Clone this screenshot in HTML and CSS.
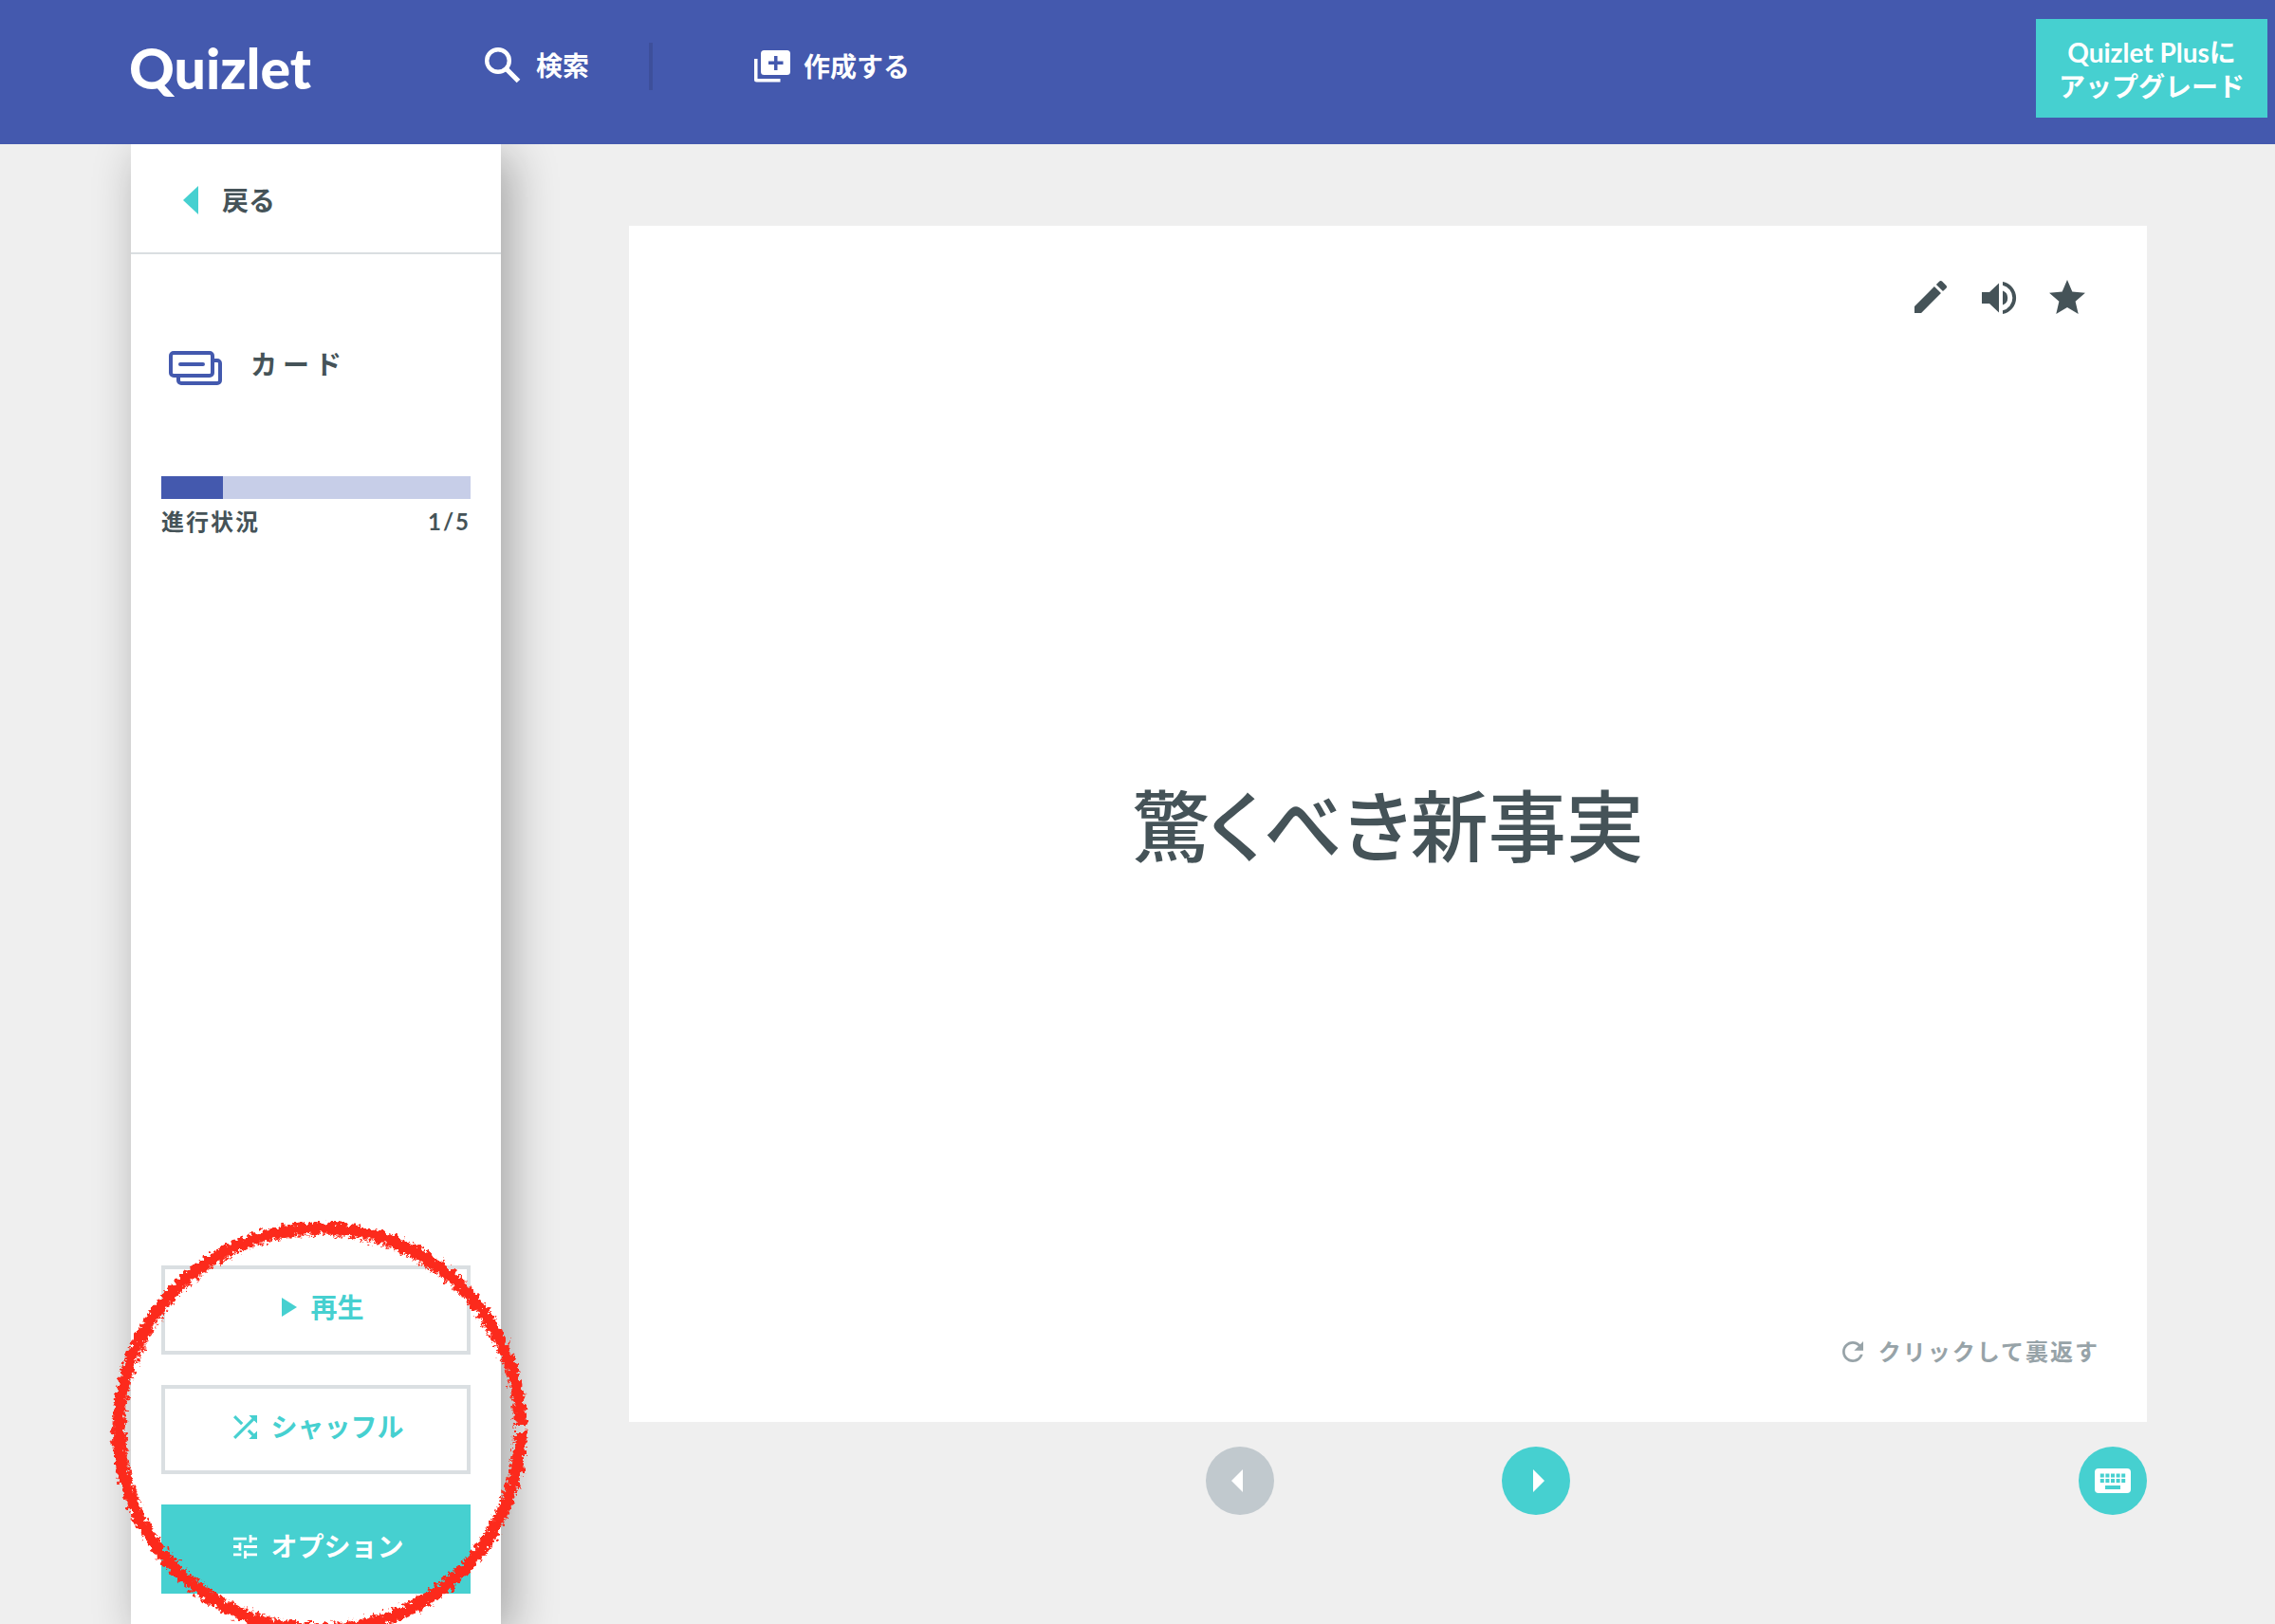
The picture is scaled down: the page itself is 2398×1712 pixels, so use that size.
FILE: index.html
```html
<!DOCTYPE html>
<html lang="ja">
<head>
<meta charset="utf-8">
<meta name="viewport" content="width=device-width, initial-scale=1">
<title>カード | Quizlet</title>
<link rel="stylesheet" href="styles.css">
</head>
<body>
<header class="site-header">
  <a class="logo" href="#">Quizlet</a>
  <nav class="nav">
    <a class="nav-link nav-search" href="#">
      <svg class="icon-search" viewBox="0 0 38 38" aria-hidden="true"><circle cx="14" cy="14" r="11.8" fill="none" stroke="currentColor" stroke-width="4.4"/><path d="M23.500 23.500L35.500 35.500" stroke="currentColor" stroke-width="5.200"/></svg>
      <span>検索</span>
    </a>
    <a class="nav-link nav-create" href="#">
      <svg class="icon-create" viewBox="0 0 38 34" aria-hidden="true"><path fill="currentColor" fill-rule="evenodd" d="M10.500 0h24a3.500 3.500 0 0 1 3.500 3.500v19a3.500 3.500 0 0 1-3.500 3.500h-24a3.500 3.500 0 0 1-3.500-3.500v-19a3.500 3.500 0 0 1 3.500-3.500zM21 6v5.500h-6v3.500h6v6h3.500v-6h6v-3.500h-6v-5.500zM0 9h3.500v21h24v3.500h-25a2.500 2.500 0 0 1-2.500-2.500z"/></svg>
      <span>作成する</span>
    </a>
  </nav>
  <button class="upgrade" type="button">Quizlet Plusに<br>アップグレード</button>
</header>
<div class="layout">
  <aside class="sidebar">
    <a class="back" href="#">
      <svg class="icon-back" viewBox="0 0 16 30" aria-hidden="true"><path fill="#46d0d0" d="M16 0v30L0 15z"/></svg>
      <span>戻る</span>
    </a>
    <h1 class="mode">
      <svg class="icon-cards" viewBox="0 0 56 36" fill="none" stroke="#4359ae" stroke-width="4" stroke-linecap="round" aria-hidden="true"><rect x="2" y="2" width="44" height="24" rx="3"/><path d="M12 14h24M48 10h3a3 3 0 0 1 3 3v18a3 3 0 0 1-3 3H13a3 3 0 0 1-3-3v-3"/></svg>
      <span>カード</span>
    </h1>
    <div class="progress">
      <div class="progress-track"><div class="progress-fill" style="width:20%"></div></div>
      <div class="progress-text"><span>進行状況</span><span>1/5</span></div>
    </div>
    <div class="actions">
      <button class="action" type="button">
        <svg class="icon-action" viewBox="-9 -2 25 25" aria-hidden="true"><path fill="currentColor" d="M0 0l16 10L0 20z"/></svg>
        <span>再生</span>
      </button>
      <button class="action" type="button">
        <svg class="icon-action" viewBox="4 4 16 16" aria-hidden="true"><path fill="currentColor" d="M10.590 9.170L5.410 4 4 5.410l5.170 5.170 1.420-1.410zM14.500 4l2.040 2.040L4 18.590 5.410 20 17.960 7.460 20 9.500V4h-5.500zm.330 9.410l-1.410 1.410 3.130 3.130L14.500 20H20v-5.500l-2.040 2.040-3.130-3.130z"/></svg>
        <span>シャッフル</span>
      </button>
      <button class="action action-primary" type="button">
        <svg class="icon-action" viewBox="3 3 18 18" aria-hidden="true"><path fill="currentColor" d="M3 17v2h6v-2H3zM3 5v2h10V5H3zm10 16v-2h8v-2h-8v-2h-2v6h2zM7 9v2H3v2h4v2h2V9H7zm14 4v-2H11v2h10zm-6-4h2V7h4V5h-4V3h-2v6z"/></svg>
        <span>オプション</span>
      </button>
      <svg class="marker" viewBox="0 0 460 460" aria-hidden="true">
        <defs>
          <filter id="crayon" x="0" y="0" width="460" height="460" filterUnits="userSpaceOnUse">
            <feTurbulence type="fractalNoise" baseFrequency="0.200" numOctaves="3" seed="4" result="n"/>
            <feDisplacementMap in="SourceGraphic" in2="n" scale="12" xChannelSelector="R" yChannelSelector="G"/>
          </filter>
        </defs>
        <g filter="url(#crayon)" fill="none" stroke="#fc2b1c">
          <path stroke-width="12" d="M443 226A212 212 0 1 0 443 233"/>
          <circle cx="231" cy="230" r="205" stroke-width="2" stroke-dasharray="3 3 5 2 2 4"/>
          <circle cx="231" cy="230" r="218" stroke-width="1" stroke-dasharray="5 3 2 6"/>
        </g>
      </svg>
    </div>
  </aside>
  <main class="main">
    <section class="card">
      <div class="card-tools">
        <button class="tool" type="button" aria-label="編集"><svg class="icon-pencil" viewBox="3 3 18 18" aria-hidden="true"><path fill="currentColor" d="M3 17.250V21h3.750L17.810 9.940l-3.750-3.750L3 17.250zM20.710 7.040c.390-.390.390-1.020 0-1.410l-2.340-2.340c-.390-.390-1.020-.390-1.410 0l-1.830 1.830 3.750 3.750 1.830-1.830z"/></svg></button>
        <button class="tool" type="button" aria-label="音声"><svg class="icon-sound" viewBox="-1 -1 36 34" aria-hidden="true"><path fill="currentColor" d="M0 11h8L18 1.500v31L8 23H0zM22 9.500a8 8 0 0 1 0 15zM22 0a17.300 17.300 0 0 1 0 34v-3.800a13.600 13.600 0 0 0 0-26.400z"/></svg></button>
        <button class="tool" type="button" aria-label="スター"><svg class="icon-star" viewBox="2 2 20 19" aria-hidden="true"><path fill="currentColor" d="M12 17.270L18.180 21l-1.640-7.030L22 9.240l-7.190-.610L12 2 9.190 8.630 2 9.240l5.460 4.730L5.820 21z"/></svg></button>
      </div>
      <p class="term">驚くべき新事実</p>
      <button class="flip" type="button">
        <svg class="icon-flip" viewBox="4 4 16 16" aria-hidden="true"><path fill="currentColor" d="M17.650 6.350C16.200 4.900 14.210 4 12 4c-4.420 0-7.990 3.580-7.990 8s3.570 8 7.990 8c3.730 0 6.840-2.550 7.730-6h-2.080c-.820 2.330-3.040 4-5.650 4-3.310 0-6-2.690-6-6s2.690-6 6-6c1.660 0 3.140.690 4.220 1.780L13 11h7V4l-2.350 2.350z"/></svg>
        <span>クリックして裏返す</span>
      </button>
    </section>
    <div class="controls">
      <div class="pager">
        <button class="round round-off" type="button" aria-label="前へ"><svg class="icon-step" viewBox="0 0 18 24" aria-hidden="true"><path fill="currentColor" d="M12 0v24L0 12z"/></svg></button>
        <button class="round" type="button" aria-label="次へ"><svg class="icon-step" viewBox="0 0 18 24" aria-hidden="true"><path fill="currentColor" d="M6 0v24l12-12z"/></svg></button>
      </div>
      <button class="round" type="button" aria-label="キーボード"><svg class="icon-keyboard" viewBox="0 0 38 26" aria-hidden="true"><rect width="38" height="26" rx="4" fill="currentColor"/><path stroke="#46d0d0" stroke-width="4" stroke-dasharray="4 1.600" d="M5.800 7.500h26.800M5.800 13h26.800"/><path stroke="#46d0d0" stroke-width="4" d="M11 20h16"/></svg></button>
    </div>
  </main>
</div>
</body>
</html>
```
FILE: styles.css
```css
* { box-sizing: border-box; }

body {
  margin: 0;
  min-height: 100vh;
  display: flex;
  flex-direction: column;
  overflow: hidden;
  background: #efefef;
  color: #455358;
  font-family: Lato, "Noto Sans CJK JP", sans-serif;
  font-size: 28px;
  font-weight: 700;
  line-height: 36px;
}

a { color: inherit; text-decoration: none; }
button { padding: 0; border: 0; background: none; color: inherit; font: inherit; cursor: pointer; }
svg { display: block; flex: none; }

.site-header {
  position: relative;
  z-index: 1;
  height: 152px;
  padding: 20px 8px 28px 136px;
  display: flex;
  align-items: center;
  background: #4459ae;
  color: #fff;
}
.logo { width: 375px; font-size: 59px; font-weight: 900; line-height: 68px; }
.nav { display: flex; align-items: center; flex: 1; padding-bottom: 4px; }
.nav-link { display: flex; align-items: center; }
.nav-search { width: 177px; height: 50px; gap: 16px; padding-bottom: 2px; border-right: 4px solid #3d4f9b; }
.nav-create { margin-left: 107px; gap: 14px; }
.icon-search { width: 38px; height: 38px; }
.icon-create { width: 38px; height: 34px; }
.upgrade { width: 244px; height: 104px; padding-top: 2px; background: #46d0d0; }

.layout { flex: 1; display: flex; }

.sidebar {
  width: 390px;
  margin-left: 138px;
  padding-bottom: 32px;
  display: flex;
  flex-direction: column;
  flex: none;
  background: #fff;
  box-shadow: 10px 12px 46px rgba(0, 0, 0, 0.32);
}
.back {
  height: 116px;
  padding: 4px 0 0 55px;
  display: flex;
  align-items: center;
  gap: 25px;
  border-bottom: 2px solid #dadee1;
}
.icon-back { width: 16px; height: 30px; }
.mode {
  margin: 94px 0 0;
  padding-left: 40px;
  display: flex;
  align-items: center;
  gap: 30px;
  font-size: 28px;
  font-weight: 700;
  letter-spacing: 6px;
}
.icon-cards { width: 56px; height: 36px; margin-top: 8px; }
.progress { margin: 96px 32px 0; }
.progress-track { height: 24px; background: #c7cee8; }
.progress-fill { height: 100%; background: #4459ae; }
.progress-text {
  padding-top: 6px;
  display: flex;
  justify-content: space-between;
  font-size: 24px;
  letter-spacing: 2px;
}

.actions { position: relative; margin: auto 32px 0; display: grid; gap: 32px; }
.action {
  height: 94px;
  padding: 0 0 6px 6px;
  display: flex;
  align-items: center;
  justify-content: center;
  gap: 14px;
  border: 4px solid #dadfe2;
  background: #fff;
  color: #46d0d0;
}
.action-primary { border-color: #46d0d0; background: #46d0d0; color: #fff; }
.icon-action { width: 25px; height: 25px; }
.marker { position: absolute; left: -64px; top: -57px; width: 460px; height: 460px; pointer-events: none; }

.main { flex: 1; padding: 86px 135px 115px; display: flex; flex-direction: column; }
.card { flex: 1; padding: 56px 50px; display: flex; flex-direction: column; background: #fff; }
.card-tools { padding-right: 15px; display: flex; justify-content: flex-end; align-items: center; gap: 36px; height: 38px; }
.icon-pencil { width: 34px; height: 34px; }
.icon-sound { width: 36px; height: 34px; overflow: visible; }
.icon-star { width: 38px; height: 36px; }
.term {
  margin: auto;
  font-size: 82px;
  font-weight: 500;
  line-height: 96px;
  font-feature-settings: "palt";
}
.flip {
  align-self: flex-end;
  display: flex;
  align-items: center;
  gap: 16px;
  color: #97a3a8;
  font-size: 24px;
  letter-spacing: 2px;
}
.icon-flip { width: 22px; height: 22px; }

.controls { padding-top: 26px; display: grid; grid-template-columns: 1fr auto 1fr; }
.pager { grid-column: 2; display: flex; gap: 240px; }
.controls > .round { justify-self: end; }
.round {
  width: 72px;
  height: 72px;
  display: grid;
  place-items: center;
  border-radius: 50%;
  background: #46d0d0;
  color: #fff;
}
.round-off { background: #c1c9ce; }
.icon-step { width: 18px; height: 24px; }
.icon-keyboard { width: 38px; height: 26px; }
```
